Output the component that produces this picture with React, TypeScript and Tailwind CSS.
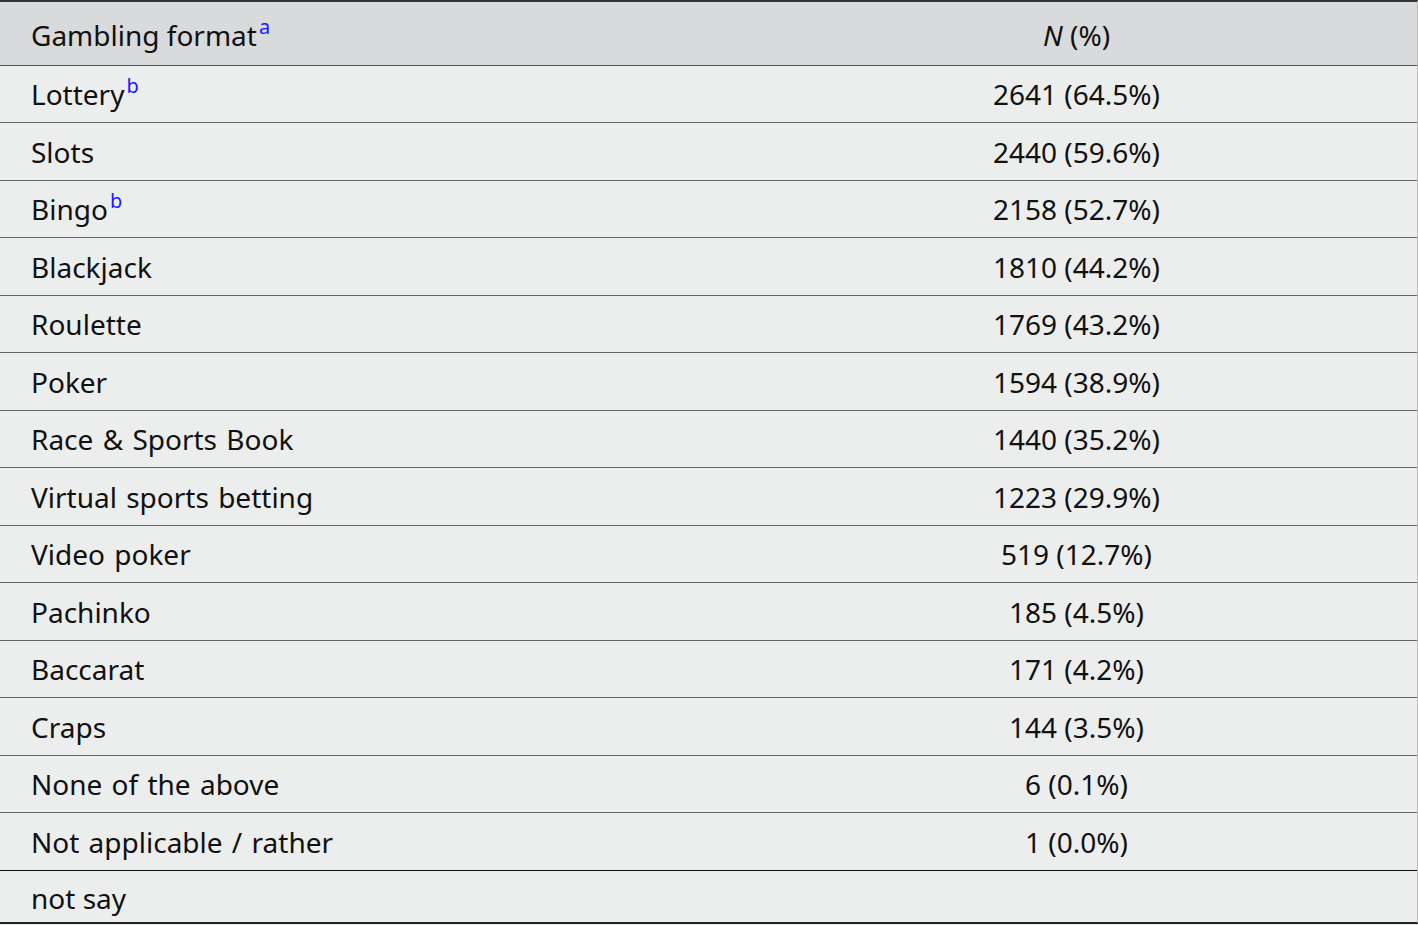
const rows: [string, string, string?][] = [
  ['Lottery', '2641 (64.5%)', 'b'],
  ['Slots', '2440 (59.6%)'],
  ['Bingo', '2158 (52.7%)', 'b'],
  ['Blackjack', '1810 (44.2%)'],
  ['Roulette', '1769 (43.2%)'],
  ['Poker', '1594 (38.9%)'],
  ['Race & Sports Book', '1440 (35.2%)'],
  ['Virtual sports betting', '1223 (29.9%)'],
  ['Video poker', '519 (12.7%)'],
  ['Pachinko', '185 (4.5%)'],
  ['Baccarat', '171 (4.2%)'],
  ['Craps', '144 (3.5%)'],
  ['None of the above', '6 (0.1%)'],
  ['Not applicable / rather', '1 (0.0%)'],
]

function Note({ children }: { children: string }) {
  return <sup className="-top-[12px] ml-[2px] text-[20px] text-[#1a1aff]">{children}</sup>
}

export default function App() {
  return (
    <div
      className="h-[925px] w-[1418px] overflow-hidden bg-[#eceded] text-[28px] text-[#111]"
      style={{ fontFamily: '"Noto Sans", "Open Sans", sans-serif' }}
    >
      <div className="border-t-2 border-b-2 border-r border-t-[#333] border-b-[#222] border-r-[#bbb]">
        <div className="grid h-[63.5px] grid-cols-[736px_1fr] items-center border-b border-[#555] bg-[#d9dadb] pt-[3px]">
          <div className="pl-[31px]">
            Gambling format<Note>a</Note>
          </div>
          <div className="text-center">
            <i>N</i> (%)
          </div>
        </div>
        {rows.map(([label, value, note], i) => (
          <div
            key={label}
            className={
              'grid h-[57.5px] grid-cols-[736px_1fr] items-center border-b pt-[1px] ' +
              (i === rows.length - 1 ? 'border-[#111]' : 'border-[#666]')
            }
          >
            <div className="pl-[31px] [word-spacing:2px]">
              {label}
              {note && <Note>{note}</Note>}
            </div>
            <div className="text-center">{value}</div>
          </div>
        ))}
        <div className="flex h-[51.5px] items-center pl-[31px] pt-[3px]">not say</div>
      </div>
    </div>
  )
}
